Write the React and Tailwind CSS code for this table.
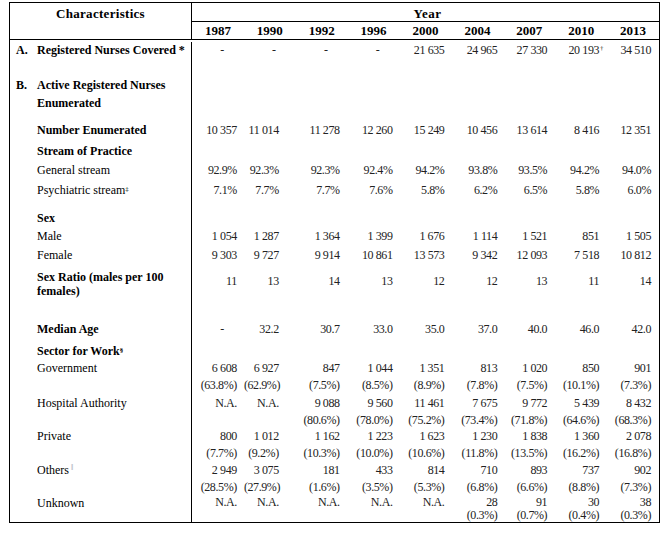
import React from 'react';

const years = ['1987', '1990', '1992', '1996', '2000', '2004', '2007', '2010', '2013'];

// right padding per year column, the numbers in the source don't line up evenly
const pads = ['pr-[7px]', 'pr-[17px]', 'pr-[8px]', 'pr-[7px]', 'pr-[7px]', 'pr-[6px]', 'pr-[8px]', 'pr-[8px]', 'pr-[8px]'];

const rows = [
  { key: 'a', h: 'h-[34px]', letter: 'A.', bold: true, label: <>Registered Nurses Covered *</>,
    vals: ['-', '-', '-', '-', '21 635', '24 965', '27 330', { v: '20 193', sup: '†' }, '34 510'] },
  { key: 'b', h: 'h-[46px]', letter: 'B.', bold: true, tall: true, label: <>Active Registered Nurses<br />Enumerated</> },
  { key: 'ne', h: 'h-[21px]', bold: true, label: 'Number Enumerated',
    vals: ['10 357', '11 014', '11 278', '12 260', '15 249', '10 456', '13 614', '8 416', '12 351'] },
  { key: 'sop', h: 'h-[19px]', bold: true, label: 'Stream of Practice' },
  { key: 'gs', h: 'h-[20px]', label: 'General stream',
    vals: ['92.9%', '92.3%', '92.3%', '92.4%', '94.2%', '93.8%', '93.5%', '94.2%', '94.0%'] },
  { key: 'ps', h: 'h-[28px]', label: <>Psychiatric stream<sup className="text-[7px]">‡</sup></>,
    vals: ['7.1%', '7.7%', '7.7%', '7.6%', '5.8%', '6.2%', '6.5%', '5.8%', '6.0%'] },
  { key: 'sex', h: 'h-[18px]', bold: true, label: 'Sex' },
  { key: 'm', h: 'h-[19px]', label: 'Male',
    vals: ['1 054', '1 287', '1 364', '1 399', '1 676', '1 114', '1 521', '851', '1 505'] },
  { key: 'f', h: 'h-[23px]', label: 'Female',
    vals: ['9 303', '9 727', '9 914', '10 861', '13 573', '9 342', '12 093', '7 518', '10 812'] },
  { key: 'sr', h: 'h-[51px]', bold: true, ratio: true, label: <>Sex Ratio (males per 100<br />females)</>,
    vals: ['11', '13', '14', '13', '12', '12', '13', '11', '14'] },
  { key: 'ma', h: 'h-[22px]', bold: true, label: 'Median Age',
    vals: ['-', '32.2', '30.7', '33.0', '35.0', '37.0', '40.0', '46.0', '42.0'] },
  { key: 'sw', h: 'h-[17px]', bold: true, label: <>Sector for Work<sup className="text-[7px]">§</sup></> },
  { key: 'gov', h: 'h-[35px]', label: 'Government',
    vals: [['6 608', '(63.8%)'], ['6 927', '(62.9%)'], ['847', '(7.5%)'], ['1 044', '(8.5%)'], ['1 351', '(8.9%)'],
      ['813', '(7.8%)'], ['1 020', '(7.5%)'], ['850', '(10.1%)'], ['901', '(7.3%)']] },
  { key: 'ha', h: 'h-[33px]', label: 'Hospital Authority',
    vals: ['N.A.', 'N.A.', ['9 088', '(80.6%)'], ['9 560', '(78.0%)'], ['11 461', '(75.2%)'], ['7 675', '(73.4%)'],
      ['9 772', '(71.8%)'], ['5 439', '(64.6%)'], ['8 432', '(68.3%)']] },
  { key: 'pr', h: 'h-[34px]', label: 'Private',
    vals: [['800', '(7.7%)'], ['1 012', '(9.2%)'], ['1 162', '(10.3%)'], ['1 223', '(10.0%)'], ['1 623', '(10.6%)'],
      ['1 230', '(11.8%)'], ['1 838', '(13.5%)'], ['1 360', '(16.2%)'], ['2 078', '(16.8%)']] },
  { key: 'ot', h: 'h-[34px]', label: <>Others<sup className="ml-[2px] text-[8px] text-gray-400">‖</sup></>,
    vals: [['2 949', '(28.5%)'], ['3 075', '(27.9%)'], ['181', '(1.6%)'], ['433', '(3.5%)'], ['814', '(5.3%)'],
      ['710', '(6.8%)'], ['893', '(6.6%)'], ['737', '(8.8%)'], ['902', '(7.3%)']] },
  { key: 'un', h: 'h-[26px]', label: 'Unknown', tight: true,
    vals: ['N.A.', 'N.A.', 'N.A.', 'N.A.', 'N.A.', ['28', '(0.3%)'], ['91', '(0.7%)'], ['30', '(0.4%)'], ['38', '(0.3%)']] },
];

const Cell = ({ val, i, row }) => {
  if (val === '-') {
    return <div className="pl-[8px] text-center leading-[17px]">-</div>;
  }
  let lead = 'leading-[17px]';
  if (row.tight) lead = 'leading-[13px]';
  if (row.ratio) lead = 'pt-[3px] leading-[17px]';
  return (
    <div className={`text-right ${pads[i]} ${lead}`}>
      {Array.isArray(val) ? (
        <>
          <div>{val[0]}</div>
          <div>{val[1]}</div>
        </>
      ) : typeof val === 'object' ? (
        <span className="relative">
          {val.v}
          <span className="absolute left-full top-[-3px] ml-[1px] text-[7px]">{val.sup}</span>
        </span>
      ) : (
        val
      )}
    </div>
  );
};

const Row = ({ row }) => (
  <div className={`flex ${row.h}`}>
    <div className={`w-[182px] shrink-0 border-r border-black pl-[6px] flex
      ${row.bold ? 'font-bold' : ''}
      ${row.tall ? 'leading-[18px]' : row.ratio ? 'leading-[14px]' : row.tight ? 'pt-[1px] leading-[13px]' : 'leading-[17px]'}`}>
      <span className="w-[21px] shrink-0">{row.letter}</span>
      <span>{row.label}</span>
    </div>
    <div className="flex-1 grid grid-cols-9 text-[12px] tracking-[-0.4px] text-[#222]">
      {row.vals && row.vals.map((v, i) => <Cell key={i} val={v} i={i} row={row} />)}
    </div>
  </div>
);

export default function App() {
  return (
    <div className="min-h-[535px] bg-white pt-[2px] font-['Liberation_Serif','Times_New_Roman',serif] text-[12px] text-black">
      <div className="ml-[9px] w-[651px] border border-black">
        {/* header */}
        <div className="flex border-b border-black">
          <div className="w-[182px] shrink-0 border-r border-black pt-[2px] text-center text-[13px] font-bold leading-[17px] tracking-[0.3px]">
            Characteristics
          </div>
          <div className="flex-1">
            <div className="h-[19px] border-b border-black pt-[2px] pl-[4px] text-center text-[13px] font-bold leading-[17px] tracking-[0.5px]">
              Year
            </div>
            <div className="grid h-[17px] grid-cols-9 text-[13px] font-bold leading-[17px]">
              {years.map((y) => (
                <div key={y} className="text-center">{y}</div>
              ))}
            </div>
          </div>
        </div>

        {/* body */}
        <div className="pt-[2px]">
          {rows.map((r) => (
            <Row key={r.key} row={r} />
          ))}
        </div>
      </div>
    </div>
  );
}
